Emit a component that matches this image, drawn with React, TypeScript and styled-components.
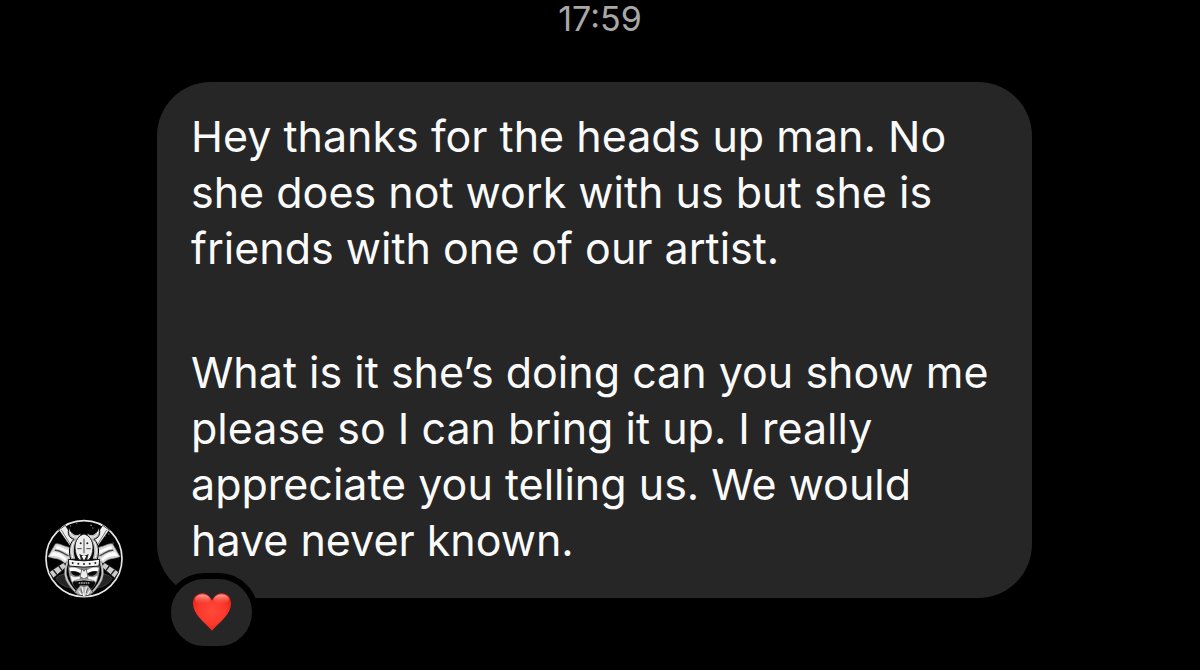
import React from "react";
import styled, { createGlobalStyle } from "styled-components";

const GlobalStyle = createGlobalStyle`
  * { box-sizing: border-box; }
  body {
    margin: 0;
    background: #000;
    color: #fafafa;
    font-family: Inter, "Liberation Sans", sans-serif;
  }
`;

const Thread = styled.main`
  display: flex;
  flex-direction: column;
  gap: 44px;
  padding-bottom: 72px;
`;

const Timestamp = styled.time`
  display: block;
  text-align: center;
  font-size: 34px;
  line-height: 38px;
  color: #a8a8a8;
`;

const MessageRow = styled.article`
  display: flex;
  align-items: flex-end;
  gap: 34px;
  padding: 0 168px 0 45px;
`;

const Avatar = styled.svg`
  flex: none;
  width: 78px;
  height: 79px;
`;

const Bubble = styled.div`
  position: relative;
  flex: 1;
  padding: 26px 34px 30px;
  border-radius: 54px;
  background: #262626;
`;

const Paragraph = styled.p`
  margin: 0;
  font-size: 43px;
  line-height: 56px;
  & + & { margin-top: 68px; }
`;

const Reaction = styled.button`
  position: absolute;
  left: 8px;
  bottom: -54px;
  display: flex;
  align-items: center;
  justify-content: center;
  width: 93px;
  height: 79px;
  padding: 0 0 2px;
  border: 6px solid #000;
  border-radius: 40px;
  background: #262626;
`;

function SamuraiHalf() {
  return (
    <g>
      {/* banner pole */}
      <path d="M74 60 L94 46 L128 100 L112 114 Z" fill="#eee" stroke="#000" strokeWidth="2" />
      <path d="M82 60 L112 108" stroke="#777" strokeWidth="3" />
      {/* shoulder fan */}
      <path d="M64 102 C76 98 88 110 114 114 L108 152 L92 160 C76 142 62 148 42 140 Z" fill="#d8d8d8" stroke="#888" strokeWidth="2" />
      <path d="M68 108 C82 108 90 120 110 122 L106 130 C90 126 80 116 66 116Z" fill="#fff" />
      <path d="M54 128 C72 124 84 134 98 146 L94 154 C78 138 68 138 48 138Z" fill="#fff" />
      <path d="M62 121 C78 119 86 130 104 138" fill="none" stroke="#444" strokeWidth="4" />
      {/* crossed hilt */}
      <path d="M88 158 L98 170 L58 204 L46 186 Z" fill="#ccc" stroke="#111" strokeWidth="2" />
      <path d="M58 180 L69 194 M74 168 L84 181" stroke="#222" strokeWidth="4" />
      <path d="M66 206 C76 192 84 196 96 190 L112 234 C90 230 76 222 66 206Z" fill="#242424" stroke="#555" strokeWidth="2" />
      {/* helmet cheek cord */}
      <path d="M101 154 C90 182 94 206 106 222 C114 236 124 246 134 254" fill="none" stroke="#999" strokeWidth="7" />
      <path d="M99 158 C90 184 95 206 108 224 C116 236 124 244 134 252" fill="none" stroke="#f0f0f0" strokeWidth="2" />
      {/* crest horn hugging the bowl */}
      <path d="M106 50 C98 72 106 84 120 88 C104 102 104 126 110 148 L126 148 C118 126 120 104 132 86 C140 80 142 74 140 68 C132 78 110 76 106 50Z" fill="#bbb" stroke="#000" strokeWidth="3" />
      <path d="M108 66 C112 80 122 84 132 80 M120 94 C112 108 112 126 116 144" fill="none" stroke="#fff" strokeWidth="3" />
      {/* face half */}
      <path d="M103 168 H150 V250 C126 246 102 214 103 168Z" fill="#8c8c8c" />
      <path d="M106 174 C120 170 136 174 147 186 L140 190 C128 182 118 182 108 184Z" fill="#fff" />
      <path d="M110 185 C122 182 132 186 140 192 L134 197 C124 198 116 196 110 185Z" fill="#080808" />
      <path d="M109 196 C120 204 132 202 140 198 L136 208 C126 208 118 212 114 216Z" fill="#f4f4f4" />
      <path d="M116 218 C122 210 136 210 150 210 V226 H138 L130 238 C122 232 118 226 116 218Z" fill="#0a0a0a" />
    </g>
  );
}

function SamuraiAvatar() {
  return (
    <Avatar viewBox="33 27 234 237" role="img" aria-label="Samurai profile picture">
      <circle cx="150" cy="146" r="114" fill="#020202" stroke="#e8e8e8" strokeWidth="5" />
      <path d="M108 48h3M127 40h3M169 46h5M175 54h3M213 78h3M223 72h3M236 99h3" stroke="#aaa" strokeWidth="3" />
      <SamuraiHalf />
      <g transform="translate(300 0) scale(-1 1)"><SamuraiHalf /></g>
      {/* helmet bowl */}
      <path d="M150 72 C134 76 123 92 123 112 C123 128 128 142 136 150 H164 C172 142 177 128 177 112 C177 92 166 76 150 72Z" fill="#eee" stroke="#222" strokeWidth="3" />
      <path d="M150 86V130M130 116H143M157 116H170" stroke="#444" strokeWidth="3" />
      <circle cx="140" cy="100" r="3" fill="#222" />
      <circle cx="160" cy="100" r="3" fill="#222" />
      <path d="M136 132 L150 138 L164 132 L158 154 H142Z" fill="#222" />
      <path d="M143 138H157L150 151Z" fill="#fff" />
      {/* brow plate */}
      <path d="M103 148 Q150 157 197 148 L195 168 Q150 175 105 168Z" fill="#f4f4f4" stroke="#111" strokeWidth="3" />
      <g fill="#222">
        <circle cx="116" cy="159" r="3" />
        <circle cx="133" cy="161" r="3" />
        <circle cx="150" cy="162" r="3" />
        <circle cx="167" cy="161" r="3" />
        <circle cx="184" cy="159" r="3" />
      </g>
      {/* nose, teeth and beard */}
      <path d="M144 176 L150 184 L156 176 L162 200 L150 207 L138 200Z" fill="#eee" stroke="#333" strokeWidth="2" />
      <path d="M122 213 Q150 206 178 213" fill="none" stroke="#bbb" strokeWidth="3" />
      <path d="M134 219H166" stroke="#aaa" strokeWidth="4" strokeDasharray="5 2" />
      <path d="M132 234 L140 225 L150 229 L160 225 L168 234 L178 248 Q150 268 122 248Z" fill="#b4b4b4" stroke="#222" strokeWidth="2" />
      <path d="M134 242L142 255M144 231L149 259M157 231L152 259M168 241L160 255" stroke="#fff" strokeWidth="3" />
      <path d="M140 236L145 250M162 234L156 250" stroke="#333" strokeWidth="2" />
    </Avatar>
  );
}

function Heart() {
  return (
    <svg width="40" height="40" viewBox="0 0 40 40" aria-hidden="true">
      <defs>
        <radialGradient id="heart-body" cx="50%" cy="48%" r="60%">
          <stop offset="0" stopColor="#ff4a38" />
          <stop offset="0.6" stopColor="#fb382c" />
          <stop offset="1" stopColor="#e82018" />
        </radialGradient>
        <linearGradient id="heart-shine" x1="0" y1="0" x2="0" y2="1">
          <stop offset="0" stopColor="#ffc0b4" stopOpacity="0.85" />
          <stop offset="1" stopColor="#ff5a48" stopOpacity="0" />
        </linearGradient>
      </defs>
      <path d="M20 8.500C17.500 3.500 14 1.300 10.300 1.300C4.800 1.300 1 5.500 1 11.500C1 22.500 12.500 30 20 38.700C27.500 30 39 22.500 39 11.500C39 5.500 35.200 1.300 29.700 1.300C26 1.300 22.500 3.500 20 8.500Z" fill="url(#heart-body)" />
      <ellipse cx="10.500" cy="7.500" rx="7.500" ry="5" fill="url(#heart-shine)" />
      <ellipse cx="29.500" cy="7.500" rx="7.500" ry="5" fill="url(#heart-shine)" />
    </svg>
  );
}

export default function App() {
  return (
    <>
      <GlobalStyle />
      <Thread>
        <Timestamp dateTime="17:59">17:59</Timestamp>
        <MessageRow>
          <SamuraiAvatar />
          <Bubble>
            <Paragraph>
              Hey thanks for the heads up man. No<br />
              she does not work with us but she is<br />
              friends with one of our artist.
            </Paragraph>
            <Paragraph>
              What is it she’s doing can you show me<br />
              please so I can bring it up. I really<br />
              appreciate you telling us. We would<br />
              have never known.
            </Paragraph>
            <Reaction type="button" aria-label="Heart reaction">
              <Heart />
            </Reaction>
          </Bubble>
        </MessageRow>
      </Thread>
    </>
  );
}
